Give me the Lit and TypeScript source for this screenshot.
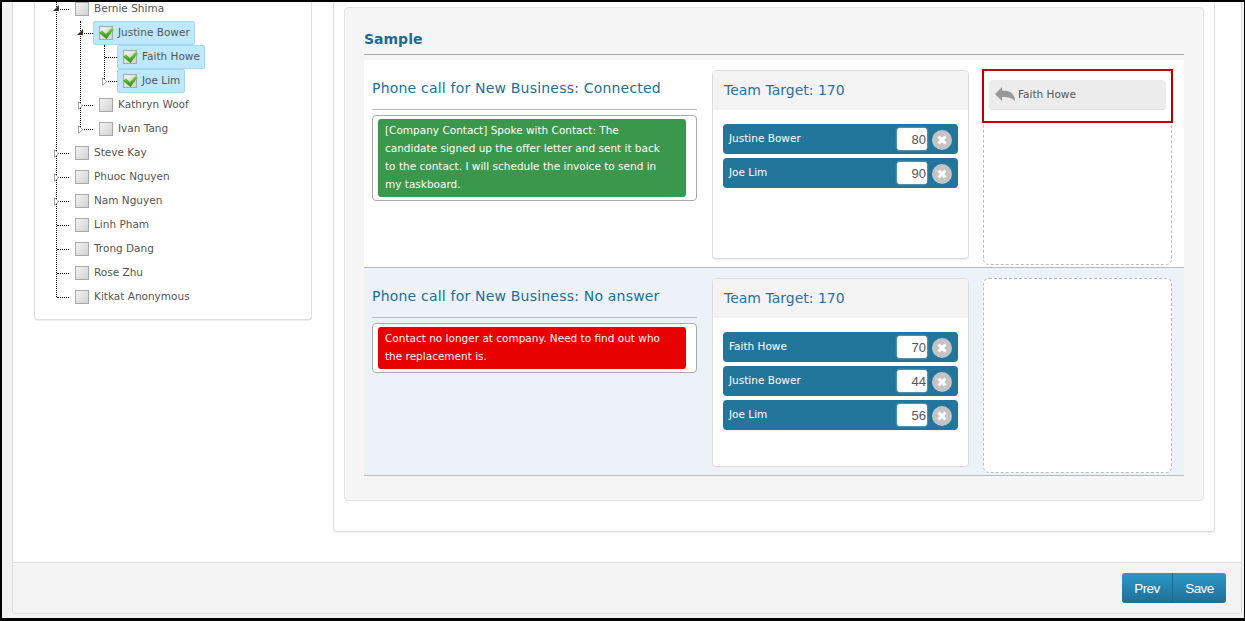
import { LitElement, html, css, svg } from "lit";
import { customElement } from "lit/decorators.js";

interface Node { name: string; checked?: boolean; open?: boolean; arrow?: boolean; kids?: Node[]; }

const TREE: Node[] = [
  { name: "Bernie Shima", open: true, arrow: true, kids: [
    { name: "Justine Bower", checked: true, open: true, arrow: true, kids: [
      { name: "Faith Howe", checked: true },
      { name: "Joe Lim", checked: true, arrow: true },
    ]},
    { name: "Kathryn Woof", arrow: true },
    { name: "Ivan Tang", arrow: true },
  ]},
  { name: "Steve Kay", arrow: true },
  { name: "Phuoc Nguyen", arrow: true },
  { name: "Nam Nguyen", arrow: true },
  { name: "Linh Pham" },
  { name: "Trong Dang" },
  { name: "Rose Zhu" },
  { name: "Kitkat Anonymous" },
];

const ROWS = [
  { cls: "", title: "Phone call for New Business: Connected", tone: "green",
    note: "[Company Contact] Spoke with Contact: The candidate signed up the offer letter and sent it back to the contact. I will schedule the invoice to send in my taskboard.",
    team: [["Justine Bower", "80"], ["Joe Lim", "90"]], drop: true },
  { cls: "alt", title: "Phone call for New Business: No answer", tone: "red",
    note: "Contact no longer at company. Need to find out who the replacement is.",
    team: [["Faith Howe", "70"], ["Justine Bower", "44"], ["Joe Lim", "56"]], drop: false },
];

@customElement("app-root")
export class AppRoot extends LitElement {
  static styles = css`
    :host { display: block; width: 1245px; height: 621px; box-sizing: border-box; overflow: hidden;
      border-style: solid; border-color: #000; border-width: 2px 1px 3px 2px; background: #f2f2f2;
      font-family: "DejaVu Sans", sans-serif; font-size: 10.5px; color: #555; }
    .panel { margin-left: 10px; width: 1230px; height: 612px; box-sizing: border-box; display: flex; flex-direction: column;
      border: 1px solid #ddd; border-top: none; border-radius: 0 0 4px 4px; background: #fff; }
    .main { flex: 1; min-height: 0; display: flex; align-items: flex-start; gap: 21px; padding: 0 26px 0 21px; overflow: hidden; }
    .footer { height: 50px; flex: none; background: #f3f3f3; border-top: 1px solid #ddd; display: flex; justify-content: flex-end;
      align-items: center; padding: 0 15px 0 0; border-radius: 0 0 4px 4px; }
    .btns { display: flex; height: 30px; border-radius: 3px; overflow: hidden; background: linear-gradient(#2c98c8, #1f6f97); }
    .btns button { all: unset; height: 30px; font: 13.5px/29px "Liberation Sans", sans-serif; letter-spacing: -0.6px; color: #fff; text-align: center; }
    .btns .prev { width: 50px; border-right: 1px solid #1c6a90; }
    .btns .save { width: 53px; }

    .card { background: #fff; border: 1px solid #ddd; border-top: none; border-radius: 0 0 4px 4px; box-shadow: 0 1px 0 #eee; box-sizing: border-box; }
    .left { width: 278px; flex: none; padding: 0 0 10px 18px; overflow: hidden; }
    ul { list-style: none; margin: 0; padding: 0; position: relative; }
    ul::before { content: ""; position: absolute; left: 3px; top: 0; bottom: 12px; border-left: 1px dotted #000; }
    .tree { margin-top: -5px; }
    ul ul { padding-left: 0; margin-left: 24px; }
    .row { height: 24px; display: flex; align-items: stretch; }
    .conn { width: 16px; flex: none; position: relative; }
    .conn::after { content: ""; position: absolute; left: 4px; right: 0; top: 12px; border-top: 1px dotted #000; }
    .conn svg { position: absolute; left: 0; top: 8px; z-index: 1; display: block; }
    .conn svg.closed { left: 1px; }
    .label { display: flex; align-items: center; gap: 5px; padding: 0 4px 0 5px; border: 1px solid transparent; border-radius: 2px; box-sizing: border-box; }
    .label.sel { background: #bde8fd; border-color: #a8d8ee; }
    .label span { position: relative; top: -1px; color: #555; white-space: nowrap; }
    .box { width: 14px; height: 14px; flex: none; display: block; overflow: visible; }

    .right { flex: 1; min-width: 0; padding: 5px 10px 30px 10px; }
    .well { background: #f5f5f5; border: 1px solid #e3e3e3; border-radius: 4px; padding: 0 19px 24px; }
    h2 { margin: 0 0 5px; height: 47px; box-sizing: border-box; padding-top: 21px; font: bold 14px/20px "DejaVu Sans", sans-serif; color: #1a6c92; border-bottom: 1px solid #aaa; }
    .rec { display: grid; grid-template-columns: 325px 257px 189px; column-gap: 15px; padding: 10px 12px 2px 8px; background: #fff; border-bottom: 1px solid #bbb; align-items: start; height: 208px; box-sizing: border-box; }
    .rec.alt { background: #edf2f9; }
    .rec > .drop { margin-left: -1px; width: 189px; }
    h3 { margin: 0; height: 40px; box-sizing: border-box; padding-top: 8px; font: normal 14px/20px "DejaVu Sans", sans-serif; letter-spacing: 0.2px; color: #1b6f98; border-bottom: 1px solid #bbb; white-space: nowrap; }
    .noteBox { margin-top: 5px; background: #fff; border: 1px solid #aaa; border-radius: 4px; padding: 3px 10px 3px 5px; }
    .note { padding: 2px 18px 4px 7px; border-radius: 3px; color: #fff; line-height: 18px; font-size: 10.5px; }
    .note.green { background: #3a974c; }
    .note.red { background: #e90000; }
    .team { height: 189px; box-sizing: border-box; background: #fff; border: 1px solid #ddd; border-radius: 4px; overflow: hidden; box-shadow: 0 1px 0 #eee; }
    .team header { height: 39px; background: #f4f4f4; font-size: 14px; line-height: 39px; padding-left: 11px; color: #2b6f9f; }
    .items { padding: 14px 10px 0; display: flex; flex-direction: column; gap: 4px; }
    .item { height: 30px; box-sizing: border-box; display: flex; align-items: center; background: #22769b; border-radius: 4px; padding: 0 6px 0 6px; color: #fff; }
    .item .nm { flex: 1; position: relative; top: -1px; }
    .item input { width: 30px; height: 22px; box-sizing: border-box; border: 0; outline: 0; border-radius: 3px; padding: 0 1px 0 0; text-align: right; color: #555;
      font: 13px "Liberation Sans", sans-serif; background: #fff; box-shadow: 0 0 2px #cfdbe2; }
    .x { width: 20px; height: 20px; margin: 2px 0 0 5px; display: block; flex: none; }
    .drop { height: 195px; box-sizing: border-box; position: relative; background: #fff; border: 1px dashed #bbb; border-radius: 6px; padding: 9px 5px; }
    .chip { height: 30px; box-sizing: border-box; background: #ececec; border-bottom: 1px solid #e2e2e2; border-radius: 4px; display: flex; align-items: center; gap: 3px; padding: 0 0 2px 6px; }
    .mark { position: absolute; left: -2px; top: -2px; width: 191px; height: 54px; box-sizing: border-box; border: 2px solid #c00000; pointer-events: none; }
  `;

  private box(checked?: boolean) {
    return html`<svg class="box" viewBox="0 0 14 14">
      <defs><linearGradient id="g" x1="0" y1="0" x2="1" y2="1"><stop offset="0" stop-color="#f4f4f4"/><stop offset="1" stop-color="#cfcfcf"/></linearGradient>
      <linearGradient id="c" x1="0" y1="0" x2="0" y2="1"><stop offset="0" stop-color="#7cd23a"/><stop offset="1" stop-color="#2b8f12"/></linearGradient></defs>
      <rect x=".5" y=".5" width="13" height="13" fill="url(#g)" stroke="#a8a8a8"/>
      ${checked ? svg`<path d="M0 7L3 4.5L7 8L12.5 2L15 3.5L7.5 13Z" fill="url(#c)"/>` : null}
    </svg>`;
  }

  private arrow(n: Node) {
    if (!n.arrow) return null;
    return n.open
      ? html`<svg width="6" height="6" viewBox="0 0 6 6"><path d="M6 0V6H0Z" fill="#333"/></svg>`
      : html`<svg class="closed" width="6" height="9" viewBox="0 0 6 9"><path d="M.5.5L4.5 4.5L.5 8.5Z" fill="#fff" stroke="#aaa"/></svg>`;
  }

  private list(nodes: Node[], top = false): unknown {
    return html`<ul class=${top ? "tree" : ""}>
      ${nodes.map((n) => html`<li>
        <div class="row">
          <div class="conn">${this.arrow(n)}</div>
          <div class="label ${n.checked ? "sel" : ""}">${this.box(n.checked)}<span>${n.name}</span></div>
        </div>
        ${n.kids ? this.list(n.kids) : null}
      </li>`)}
    </ul>`;
  }

  private rec(r: (typeof ROWS)[number]) {
    return html`<section class="rec ${r.cls}">
      <div>
        <h3>${r.title}</h3>
        <div class="noteBox"><div class="note ${r.tone}">${r.note}</div></div>
      </div>
      <div class="team">
        <header>Team Target: 170</header>
        <div class="items">
          ${r.team.map(([n, v]) => html`<div class="item">
            <span class="nm">${n}</span>
            <input .value=${v} readonly />
            <svg class="x" viewBox="0 0 20 20"><circle cx="10" cy="10" r="10" fill="#c4c4c4"/><path d="M6.5 6.5L13.5 13.5M13.5 6.5L6.5 13.5" stroke="#fff" stroke-width="3"/></svg>
          </div>`)}
        </div>
      </div>
      <div class="drop">
        ${r.drop ? html`<div class="chip">
          <svg width="20" height="14" viewBox="0 0 20 14"><path d="M7 0L0 7L7 14V10C12 9.5 17 10.5 20 14C20 6.5 15 3.5 7 3.5Z" fill="#999"/></svg>
          <span>Faith Howe</span>
        </div><div class="mark"></div>` : null}
      </div>
    </section>`;
  }

  render() {
    return html`<div class="panel">
      <div class="main">
        <div class="card left">${this.list(TREE, true)}</div>
        <div class="card right">
          <div class="well">
            <h2>Sample</h2>
            ${ROWS.map((r) => this.rec(r))}
          </div>
        </div>
      </div>
      <div class="footer">
        <div class="btns"><button class="prev">Prev</button><button class="save">Save</button></div>
      </div>
    </div>`;
  }
}
